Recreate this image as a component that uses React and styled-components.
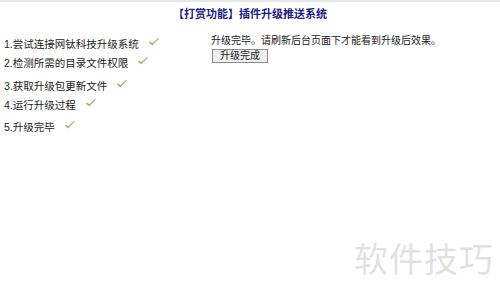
import React from "react";
import styled, { createGlobalStyle } from "styled-components";

const GlobalStyle = createGlobalStyle`
    html, body {
        margin: 0;
        padding: 0;
        background: #ffffff;
    }
    body {
        font-family: "Liberation Sans", "Noto Sans CJK SC", sans-serif;
        font-size: 10.5px;
        color: #222;
    }
`;

const steps = [
    { text: "1.尝试连接网钛科技升级系统", mt: 0 },
    { text: "2.检测所需的目录文件权限", mt: 0 },
    { text: "3.获取升级包更新文件", mt: 4 },
    { text: "4.运行升级过程", mt: 0 },
    { text: "5.升级完毕", mt: 3 },
];

function Check() {
    return (
        <CheckIcon viewBox="0 0 12 10" width="12" height="10">
            <path d="M1 5.5 L4.2 8.5 L11 1.5 L10 1 L4.3 6.3 L2.2 4.4 Z" fill="#a6b76c" />
        </CheckIcon>
    );
}

export default function App() {
    return (
        <Page>
            <GlobalStyle />
            <TopLine />
            <Title>【打赏功能】插件升级推送系统</Title>
            <Body>
                <StepList>
                    {steps.map((s, i) => (
                        <Step key={i} $mt={s.mt}>
                            <span>{s.text}</span>
                            <Check />
                        </Step>
                    ))}
                </StepList>
                <Result>
                    <Notice>升级完毕。请刷新后台页面下才能看到升级后效果。</Notice>
                    <DoneButton type="button">升级完成</DoneButton>
                </Result>
            </Body>
            <Watermark>软件技巧</Watermark>
        </Page>
    );
}

const Page = styled.div`
    position: relative;
    width: 500px;
    height: 296px;
    overflow: hidden;
    background: #fff;
`;

const TopLine = styled.div`
    height: 2px;
    background: #e6e6e6;
`;

const Title = styled.div`
    text-align: center;
    font-size: 11px;
    font-weight: bold;
    color: #1c1c84;
    line-height: 14px;
    padding-top: 5px;
`;

const Body = styled.div`
    display: flex;
    padding: 13px 0 0 4px;
`;

const StepList = styled.div`
    width: 207px;
    display: flex;
    flex-direction: column;
`;

const Step = styled.div`
    display: flex;
    align-items: center;
    gap: 9px;
    height: 19px;
    margin-top: ${(p) => p.$mt}px;
    font-size: 10.5px;
    color: #222;
`;

const CheckIcon = styled.svg`
    margin-top: -4px;
    flex: none;
`;

const Result = styled.div`
    display: flex;
    flex-direction: column;
    align-items: flex-start;
`;

const Notice = styled.div`
    font-size: 10px;
    line-height: 14px;
    color: #222;
`;

const DoneButton = styled.button`
    margin: 1px 0 0 1px;
    width: 56px;
    height: 14px;
    padding: 0;
    font-family: "Liberation Sans", "Noto Sans CJK SC", sans-serif;
    font-size: 10px;
    line-height: 12px;
    color: #222;
    background: #f0f0f0;
    border: 1px solid #8a8a8a;
    border-radius: 0;
`;

const Watermark = styled.div`
    position: absolute;
    right: 6px;
    bottom: 14px;
    font-family: "Noto Sans CJK SC", sans-serif;
    font-size: 34px;
    letter-spacing: 1px;
    color: rgba(150, 150, 150, 0.3);
`;
